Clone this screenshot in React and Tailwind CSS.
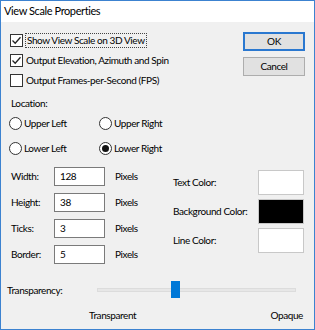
const font = { fontFamily: 'Lato, "Noto Sans", sans-serif' };

function Check({ checked }) {
  return (
    <span className="w-[13px] h-[13px] border border-[#333] bg-white flex items-center justify-center shrink-0">
      {checked && (
        <svg width="11" height="11" viewBox="0 0 11 11">
          <path d="M1.5 5.5 L4.2 8.2 L9.5 2.2" fill="none" stroke="#222" strokeWidth="1.3" />
        </svg>
      )}
    </span>
  );
}

function Radio({ checked }) {
  return (
    <span className="w-[13px] h-[13px] rounded-full border border-[#333] bg-white flex items-center justify-center shrink-0">
      {checked && <span className="w-[7px] h-[7px] rounded-full bg-[#111]" />}
    </span>
  );
}

function Field({ label, value }) {
  return (
    <div className="h-[26px] flex items-center">
      <span className="w-[43px] pl-[10px] box-content">{label}</span>
      <div className="w-[51px] h-[19px] border border-[#7a7a7a] bg-white pl-[5px] flex items-center">{value}</div>
      <span className="ml-[10px]">Pixels</span>
    </div>
  );
}

function Swatch({ label, color }) {
  return (
    <div className="h-[25px] flex items-center">
      <span className="w-[85px] whitespace-nowrap">{label}</span>
      <div className={`w-[46px] h-[25px] border border-[#c8c8c8] ${color}`} />
    </div>
  );
}

export default function App() {
  return (
    <div
      className="w-[315px] h-[330px] border border-[#3c82d0] bg-[#f0f0f0] flex flex-col text-[10px] tracking-[-0.4px] text-black overflow-hidden"
      style={font}
    >
      <div className="h-[21px] bg-white flex items-center pl-[3px] text-[11px]">View Scale Properties</div>

      {/* options + buttons */}
      <div className="flex justify-between pr-[9px]">
        <div className="pt-[8px] pl-[9px]">
          <div className="h-[20px] flex items-center gap-[2px]">
            <Check checked />
            <span className="border border-dotted border-[#444] px-[1px] leading-[13px]">Show View Scale on 3D View</span>
          </div>
          <div className="h-[20px] flex items-center gap-[3px]">
            <Check checked />
            <span>Output Elevation, Azimuth and Spin</span>
          </div>
          <div className="h-[20px] flex items-center gap-[3px]">
            <Check />
            <span>Output Frames-per-Second (FPS)</span>
          </div>
        </div>
        <div className="pt-[10px] flex flex-col gap-[6px]">
          <button className="w-[62px] h-[19px] border-2 border-[#2a78d0] bg-[#e1e1e1] flex items-center justify-center">OK</button>
          <button className="w-[62px] h-[19px] border border-[#adadad] bg-[#e1e1e1] flex items-center justify-center">Cancel</button>
        </div>
      </div>

      {/* location */}
      <div className="mt-[6px] h-[15px] flex items-center pl-[10px]">Location:</div>
      <div className="grid grid-cols-[90px_1fr] pl-[8px]">
        <div className="h-[25px] flex items-center gap-[2px]"><Radio /><span>Upper Left</span></div>
        <div className="h-[25px] flex items-center gap-[2px]"><Radio /><span>Upper Right</span></div>
        <div className="h-[25px] flex items-center gap-[2px]"><Radio /><span>Lower Left</span></div>
        <div className="h-[25px] flex items-center gap-[2px]"><Radio checked /><span>Lower Right</span></div>
      </div>

      {/* sizes + colours */}
      <div className="mt-[2px] flex justify-between pr-[10px]">
        <div>
          <Field label="Width:" value="128" />
          <Field label="Height:" value="38" />
          <Field label="Ticks:" value="3" />
          <Field label="Border:" value="5" />
        </div>
        <div className="pt-[7px] flex flex-col gap-[4px]">
          <Swatch label="Text Color:" color="bg-white" />
          <Swatch label="Background Color:" color="bg-black" />
          <Swatch label="Line Color:" color="bg-white" />
        </div>
      </div>

      {/* transparency */}
      <div className="mt-[14px] h-[18px] flex items-center pl-[6px]">
        <span className="w-[90px]">Transparency:</span>
        <div className="relative w-[199px] h-[4px] bg-[#e7e7e7] border border-[#dcdcdc]">
          <div className="absolute left-[73px] top-[-8px] w-[9px] h-[17px] bg-[#0078d7]" />
        </div>
      </div>
      <div className="mt-[9px] h-[14px] flex items-center justify-between pl-[88px] pr-[11px]">
        <span>Transparent</span>
        <span>Opaque</span>
      </div>
    </div>
  );
}
